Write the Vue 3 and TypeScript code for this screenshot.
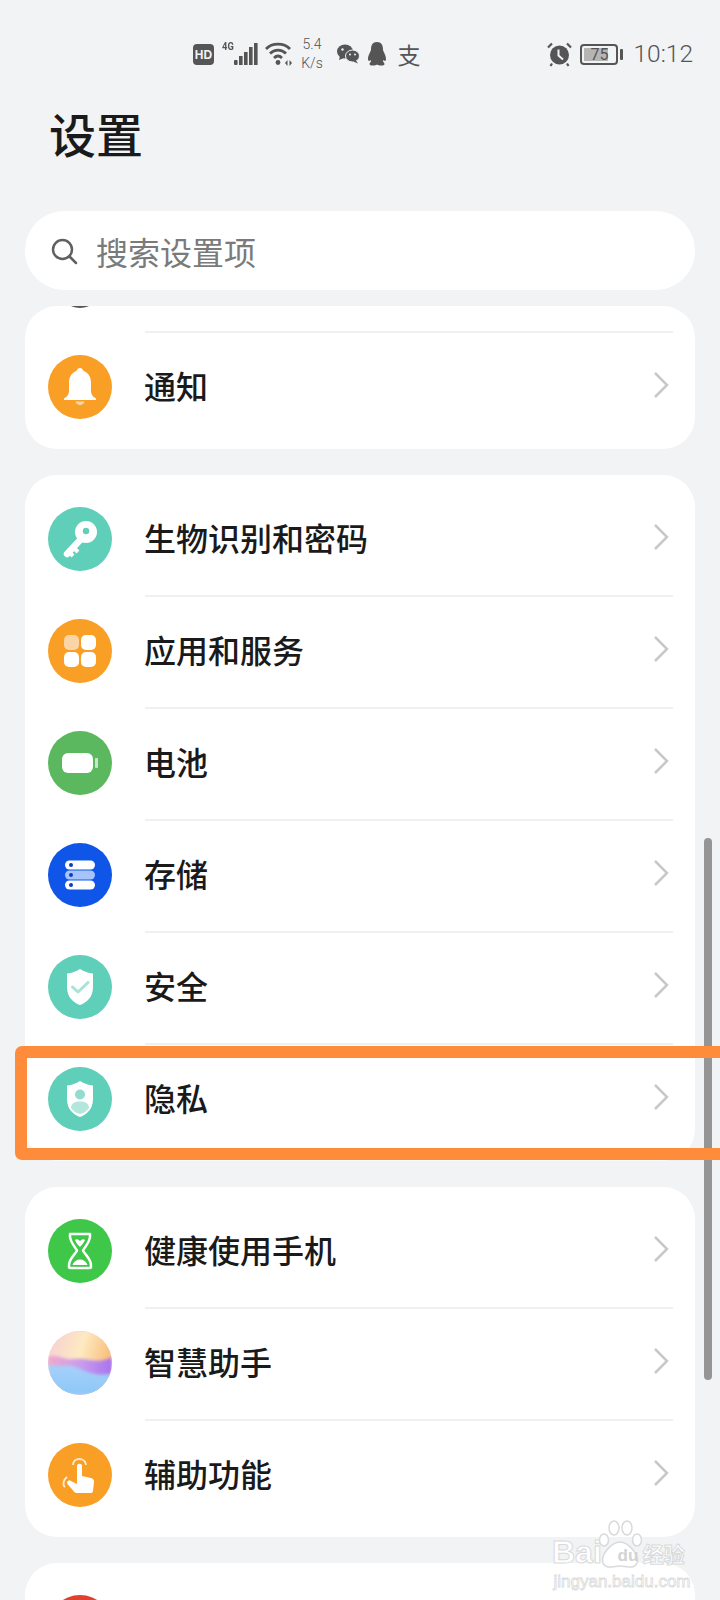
<script setup lang="ts">
type Row = { icon: string; label: string }

const firstCard: Row[] = [{ icon: 'bell', label: '通知' }]
const secondCard: Row[] = [
  { icon: 'key', label: '生物识别和密码' },
  { icon: 'apps', label: '应用和服务' },
  { icon: 'battery', label: '电池' },
  { icon: 'storage', label: '存储' },
  { icon: 'security', label: '安全' },
  { icon: 'privacy', label: '隐私' },
]
const thirdCard: Row[] = [
  { icon: 'health', label: '健康使用手机' },
  { icon: 'assistant', label: '智慧助手' },
  { icon: 'access', label: '辅助功能' },
]
const cards: Row[][] = [secondCard, thirdCard]
</script>

<template>
  <div class="page">
    <div class="status">
      <svg class="st-hd" width="21" height="21" viewBox="0 0 21 21">
        <rect width="21" height="21" rx="4" fill="#555" />
        <text x="10.5" y="15" text-anchor="middle" class="hd-text">HD</text>
      </svg>
      <div class="st-signal">
        <span class="st-4g">4G</span>
        <svg width="24" height="22" viewBox="0 0 24 22" fill="#555">
          <rect x="0" y="17" width="3.600" height="5" rx="1" />
          <rect x="5" y="13" width="3.600" height="9" />
          <rect x="10" y="9" width="3.600" height="13" />
          <rect x="15" y="4" width="3.600" height="18" />
          <rect x="20" y="0" width="3.600" height="22" />
        </svg>
      </div>
      <svg class="st-wifi" width="28" height="24" viewBox="0 0 28 24" fill="none" stroke="#555" stroke-width="2.800">
        <path d="M1 7C7 0.5 19 0.5 25 7" />
        <path d="M5 11.500C9.500 7 16.500 7 21 11.500" />
        <path d="M9 16C11.500 13.500 14.500 13.500 17 16" />
        <circle cx="13" cy="20.500" r="2.400" fill="#555" stroke="none" />
        <path d="M20 21l2.500-3v6zM27 21l-2.500-3v6z" fill="#555" stroke="none" />
      </svg>
      <div class="st-speed"><span>5.4</span><span>K/s</span></div>
      <svg class="st-wechat" width="23" height="20" viewBox="0 0 23 20" fill="#555">
        <ellipse cx="8" cy="7.500" rx="8" ry="7" />
        <path d="M3 12l-1 4 5-2z" />
        <ellipse cx="15.500" cy="12" rx="7" ry="6" stroke="#f1f3f5" stroke-width="1" />
        <path d="M19 16.500l2 3-5-2z" />
        <circle cx="5.500" cy="5.500" r="1.200" fill="#f1f3f5" />
        <circle cx="13" cy="10.500" r="1" fill="#f1f3f5" />
        <circle cx="18" cy="10.500" r="1" fill="#f1f3f5" />
      </svg>
      <svg class="st-qq" width="20" height="24" viewBox="0 0 20 24" fill="#555">
        <path d="M10 0C5.500 0 4 3.500 4 7.500C4 9.500 1 13 1 17C1 19 2 19.500 4 18C4.500 20 2.500 20.500 2.500 22C2.500 24 8 24 10 22.500C12 24 17.500 24 17.500 22C17.500 20.500 15.500 20 16 18C18 19.500 19 19 19 17C19 13 16 9.500 16 7.500C16 3.500 14.500 0 10 0Z" />
      </svg>
      <span class="st-alipay">支</span>
      <svg class="st-alarm" width="25" height="25" viewBox="0 0 25 25">
        <circle cx="12.500" cy="13" r="9.500" fill="#555" />
        <path d="M1 5.500L5 1.500M24 5.500L20 1.500M5 21.500L3.500 24M20 21.500L21.500 24" stroke="#555" stroke-width="2.200" fill="none" />
        <path d="M11.500 7.500V13.500L16 17.500" stroke="#f1f3f5" stroke-width="2" fill="none" />
      </svg>
      <div class="st-battery">
        <div class="st-battery-body"><i class="st-battery-fill"></i><span>75</span></div>
        <i class="st-battery-nub"></i>
      </div>
      <span class="st-time">10:12</span>
    </div>

    <h1 class="title">设置</h1>

    <div class="search">
      <svg width="28" height="28" viewBox="0 0 28 28" fill="none" stroke="#5f6060" stroke-width="2.500">
        <circle cx="12.500" cy="12.500" r="9.500" />
        <path d="M19.500 19.500L26 26" stroke-linecap="round" />
      </svg>
      <span>搜索设置项</span>
    </div>

    <section class="card card-clip">
      <i class="clip-dot"></i>
      <div v-for="row in firstCard" :key="row.label" class="row">
        <span class="ic ic-orange">
          <svg width="64" height="64" viewBox="0 0 64 64" fill="#fff">
            <path d="M32 13C34 13 35 14.500 35.500 16C41 18 43 22.500 43 28V36C43 39 44.500 42 48 43.500V45H16V43.500C19.500 42 21 39 21 36V28C21 22.500 23 18 28.500 16C29 14.500 30 13 32 13Z" />
            <path d="M27.500 46.500H36.500C36 48.500 34 50 32 50C30 50 28 48.500 27.500 46.500Z" opacity=".6" />
          </svg>
        </span>
        <span class="label">{{ row.label }}</span>
        <svg class="chev" width="16" height="28" viewBox="0 0 16 28" fill="none"><path d="M2 2L14 14L2 26" /></svg>
      </div>
    </section>

    <section v-for="(card, c) in cards" :key="c" class="card">
      <div v-for="row in card" :key="row.label" class="row">
        <span v-if="row.icon === 'key'" class="ic ic-teal">
          <svg width="64" height="64" viewBox="0 0 64 64">
            <path d="M34 31L19 47" fill="none" stroke="#fff" stroke-width="6.500" stroke-linecap="round" />
            <path d="M26 41L30 45M21.500 45.500L25 49" fill="none" stroke="#fff" stroke-width="4" />
            <circle cx="38" cy="25" r="11" fill="#fff" />
            <circle cx="38" cy="24" r="3.200" fill="#5fcfba" />
          </svg>
        </span>
        <span v-else-if="row.icon === 'apps'" class="ic ic-orange">
          <svg width="64" height="64" viewBox="0 0 64 64" fill="#fff">
            <rect x="16" y="16" width="15" height="15" rx="5" fill="#fcd5a6" />
            <rect x="33" y="16" width="15" height="15" rx="5" />
            <rect x="16" y="33" width="15" height="15" rx="5" />
            <rect x="33" y="33" width="15" height="15" rx="5" />
          </svg>
        </span>
        <span v-else-if="row.icon === 'battery'" class="ic ic-green">
          <svg width="64" height="64" viewBox="0 0 64 64">
            <rect x="14" y="22" width="31" height="20" rx="6" fill="#fff" />
            <rect x="47" y="27" width="3" height="10" rx="1" fill="#c5e8c6" />
          </svg>
        </span>
        <span v-else-if="row.icon === 'storage'" class="ic ic-blue">
          <svg width="64" height="64" viewBox="0 0 64 64">
            <rect x="17" y="17.500" width="30" height="9" rx="4.500" fill="#fff" />
            <rect x="17" y="27.500" width="30" height="9" rx="4.500" fill="#a6c3fc" />
            <rect x="17" y="37.500" width="30" height="9" rx="4.500" fill="#fff" />
            <circle cx="23" cy="22" r="2" fill="#0b3fb5" />
            <circle cx="23" cy="32" r="2" fill="#0b3fb5" />
            <circle cx="23" cy="42" r="2" fill="#0b3fb5" />
          </svg>
        </span>
        <span v-else-if="row.icon === 'security'" class="ic ic-teal">
          <svg width="64" height="64" viewBox="0 0 64 64" fill="none">
            <path d="M32 14C36 16.500 40 18 45 18.500V32C45 42 39 47.500 32 50C25 47.500 19 42 19 32V18.500C24 18 28 16.500 32 14Z" fill="#fff" />
            <path d="M24.500 32L30 37L40 27.500" stroke="#a9e3d7" stroke-width="3" stroke-linecap="round" stroke-linejoin="round" />
          </svg>
        </span>
        <span v-else-if="row.icon === 'privacy'" class="ic ic-teal">
          <svg width="64" height="64" viewBox="0 0 64 64">
            <path d="M32 14C36 16.500 40 18 45 18.500V32C45 42 39 47.500 32 50C25 47.500 19 42 19 32V18.500C24 18 28 16.500 32 14Z" fill="#fff" />
            <circle cx="32" cy="27.500" r="5" fill="#93dccd" />
            <path d="M23 41C23 36 27 34.500 32 34.500C37 34.500 41 36 41 41C38.500 44.500 35 46.500 32 47C29 46.500 25.500 44.500 23 41Z" fill="#b3e7dc" />
          </svg>
        </span>
        <span v-else-if="row.icon === 'health'" class="ic ic-lime">
          <svg width="64" height="64" viewBox="0 0 64 64" fill="none" stroke="#fff" stroke-width="2.500">
            <path d="M22 15H42C43 23 37 27 35 31.500C37 36 44 40 43 48C43 49 42 49 41 49H23C22 49 21 49 21 48C20 40 27 36 29 31.500C27 27 21 23 22 15Z" stroke-linejoin="round" />
            <path d="M27 21C29 19 31 21 32 22C33 21 35 19 37 21C36 24 33.500 26 32 28C30 26 28 24 27 21Z" fill="#fff" stroke="none" />
            <path d="M24.500 46C26 42 29.500 40.500 32 40.500C34.500 40.500 38 42 39.500 46Z" fill="#fff" stroke="none" />
          </svg>
        </span>
        <span v-else-if="row.icon === 'assistant'" class="ic ic-orb">
          <svg width="64" height="64" viewBox="0 0 64 64">
            <defs>
              <linearGradient id="orbTop" x1="0" y1="0" x2="1" y2="0.300">
                <stop offset="0" stop-color="#f6cdd4" />
                <stop offset="0.550" stop-color="#fdeac2" />
                <stop offset="1" stop-color="#f9bd7a" />
              </linearGradient>
              <linearGradient id="orbWave" x1="0" y1="0" x2="1" y2="0">
                <stop offset="0" stop-color="#f2a9cc" />
                <stop offset="0.500" stop-color="#c99cec" />
                <stop offset="1" stop-color="#a873ee" />
              </linearGradient>
              <linearGradient id="orbLow" x1="0" y1="0" x2="0" y2="1">
                <stop offset="0" stop-color="#a9d0fb" />
                <stop offset="1" stop-color="#8cc8f6" />
              </linearGradient>
            </defs>
            <rect width="64" height="64" fill="url(#orbTop)" />
            <path d="M0 26C8 22 16 30 26 28C38 26 50 34 64 26V48H0Z" fill="url(#orbWave)" />
            <path d="M0 32C8 38 18 32 28 36C40 42 52 46 64 42V64H0Z" fill="url(#orbLow)" />
          </svg>
        </span>
        <span v-else class="ic ic-orange">
          <svg width="64" height="64" viewBox="0 0 64 64">
            <path d="M29 23C29 20 34 20 34 23V33L43 35C45 35.500 46 37 46 39L45 48C45 49.500 43.500 50 42.500 50H29C27.500 50 26.500 49.500 25.500 48L19.500 41C18 39 20.500 36.500 23 38L29 41Z" fill="#fff" />
            <path d="M25 22C25 14 37.500 14 38 22" fill="none" stroke="#fff" stroke-width="1.800" opacity=".8" />
            <path d="M19 34C15 37 14.500 42 17 44" fill="none" stroke="#fff" stroke-width="1.800" opacity=".8" />
          </svg>
        </span>
        <span class="label">{{ row.label }}</span>
        <svg class="chev" width="16" height="28" viewBox="0 0 16 28" fill="none"><path d="M2 2L14 14L2 26" /></svg>
      </div>
    </section>

    <section class="card">
      <div class="row">
        <span class="ic ic-red"></span>
      </div>
    </section>

    <div class="scrollbar"></div>
    <div class="highlight"></div>

    <div class="mark">
      <div class="mark-top">
        <span class="mark-en">Bai</span>
        <svg class="mark-paw" width="44" height="50" viewBox="0 0 44 50" fill="#fff" stroke="#d9dadb" stroke-width="1.500">
          <ellipse cx="6" cy="20" rx="4.500" ry="6" />
          <ellipse cx="16" cy="8" rx="5" ry="7" />
          <ellipse cx="29" cy="8" rx="5" ry="7" />
          <ellipse cx="39" cy="20" rx="4.500" ry="6" />
          <path d="M22 22C30 22 42 35 39 43C36 50 28 46 22 46C16 46 8 50 5 43C2 35 14 22 22 22Z" />
        </svg>
        <span class="mark-du">du</span>
        <span class="mark-cn">经验</span>
      </div>
      <div class="mark-url">jingyan.baidu.com</div>
    </div>
  </div>
</template>

<style>
body {
  margin: 0;
  background: #f1f3f5;
}
</style>

<style scoped>
.page {
  position: relative;
  width: 720px;
  height: 1600px;
  overflow: hidden;
  background: #f1f3f5;
  font-family: "Noto Sans CJK SC", "Noto Sans", sans-serif;
  color: #1a1a1a;
}
.status {
  display: flex;
  align-items: center;
  height: 36px;
  padding-top: 36px;
  padding-left: 193px;
  color: #555;
  font-family: Roboto, "Noto Sans CJK SC", sans-serif;
}
.hd-text {
  font-family: "Liberation Sans", sans-serif;
  font-size: 12px;
  font-weight: 700;
  fill: #f1f3f5;
}
.st-signal {
  position: relative;
  margin-left: 20px;
  height: 22px;
}
.st-4g {
  position: absolute;
  left: -13px;
  top: -1px;
  font-size: 11px;
  font-weight: 700;
  line-height: 10px;
  transform: scaleX(0.85);
}
.st-wifi {
  margin-left: 7px;
}
.st-speed {
  display: flex;
  flex-direction: column;
  align-items: center;
  width: 26px;
  margin-left: 6px;
  font-size: 14px;
  font-weight: 300;
  line-height: 19px;
}
.st-wechat {
  margin-left: 12px;
}
.st-qq {
  margin-left: 7px;
}
.st-alipay {
  width: 24px;
  margin-left: 10px;
  font-family: "Noto Sans CJK SC", sans-serif;
  font-size: 23px;
  line-height: 24px;
  text-align: center;
}
.st-alarm {
  margin-left: auto;
}
.st-battery {
  display: flex;
  align-items: center;
  gap: 2px;
  margin-left: 8px;
}
.st-battery-body {
  position: relative;
  width: 38px;
  height: 21px;
  box-sizing: border-box;
  border: 2px solid #555;
  border-radius: 4px;
  font-size: 16px;
  line-height: 18px;
  text-align: center;
}
.st-battery-body span {
  position: relative;
}
.st-battery-fill {
  position: absolute;
  left: 2px;
  top: 2px;
  bottom: 2px;
  width: 24px;
  background: #b5b5b5;
}
.st-battery-nub {
  width: 3px;
  height: 11px;
  background: #555;
  border-radius: 1px;
}
.st-time {
  margin-left: 10px;
  margin-right: 27px;
  font-size: 24.500px;
  font-weight: 300;
  line-height: 30px;
}
.title {
  margin: 0;
  padding: 30px 0 0 49px;
  height: 69px;
  font-size: 47px;
  font-weight: 500;
  line-height: 62px;
  color: #1a1a1a;
}
.search {
  display: flex;
  align-items: center;
  gap: 18px;
  height: 79px;
  margin: 40px 25px 0;
  padding-left: 25px;
  background: #fff;
  border-radius: 39px;
  font-size: 32px;
  color: #7a7a7a;
}
.card {
  margin: 26px 25px 0;
  padding: 8px 0 6px;
  background: #fff;
  border-radius: 32px;
}
.card-clip {
  position: relative;
  margin-top: 16px;
  padding: 25px 0 6px;
  overflow: hidden;
}
.clip-dot {
  position: absolute;
  left: 44px;
  top: -8px;
  width: 22px;
  height: 10px;
  border-radius: 50%;
  background: #555;
}
.row {
  display: flex;
  align-items: center;
  position: relative;
  height: 112px;
  padding: 0 23px;
  box-sizing: border-box;
}
.row + .row::before {
  content: "";
  position: absolute;
  left: 120px;
  right: 22px;
  top: 0;
  height: 2px;
  background: #f0f0f0;
}
.card-clip .row::before {
  content: "";
  position: absolute;
  left: 120px;
  right: 22px;
  top: 0;
  height: 2px;
  background: #f0f0f0;
}
.ic {
  position: relative;
  flex: none;
  display: block;
  width: 64px;
  height: 64px;
  border-radius: 50%;
  overflow: hidden;
}
.ic svg {
  display: block;
}
.ic-orange { background: #fa9f25; }
.ic-teal { background: #5fcfba; }
.ic-green { background: #5cb85f; }
.ic-blue { background: #0f56e8; }
.ic-lime { background: #3ec748; }
.ic-red { background: #e0402c; }
.ic-orb {
  background: #f6cdd4;
}
.ic-orb svg {
  filter: blur(1.5px);
}
.label {
  flex: 1;
  margin-left: 32px;
  margin-bottom: 4px;
  font-size: 32px;
  font-weight: 500;
  line-height: 40px;
  color: #1a1a1a;
}
.chev {
  flex: none;
  margin-right: 3px;
  margin-bottom: 4px;
}
.chev path {
  stroke: #c8c8c8;
  stroke-width: 2.500;
}
.scrollbar {
  position: absolute;
  left: 704px;
  top: 838px;
  width: 8px;
  height: 542px;
  border-radius: 4px;
  background: #959595;
}
.highlight {
  position: absolute;
  left: 15px;
  top: 1046px;
  width: 720px;
  height: 114px;
  box-sizing: border-box;
  border: 12px solid #ff8c3a;
  border-radius: 7px;
}
.mark {
  position: absolute;
  left: 552px;
  top: 1522px;
  width: 140px;
  text-align: center;
  color: #fff;
}
.mark-top {
  display: flex;
  align-items: flex-end;
  height: 46px;
  position: relative;
}
.mark-en {
  font-family: "Liberation Sans", sans-serif;
  font-size: 32px;
  font-weight: 700;
  line-height: 32px;
  -webkit-text-stroke: 1px #d9dadb;
}
.mark-paw {
  margin-left: -4px;
  margin-bottom: -2px;
}
.mark-du {
  position: absolute;
  left: 56px;
  bottom: 2px;
  width: 40px;
  font-family: "Liberation Sans", sans-serif;
  font-size: 17px;
  font-weight: 700;
  line-height: 20px;
  color: #d2d3d4;
}
.mark-cn {
  margin-left: 1px;
  font-size: 21px;
  font-weight: 700;
  line-height: 30px;
  white-space: nowrap;
  -webkit-text-stroke: 1px #d9dadb;
}
.mark-url {
  margin-top: 4px;
  font-family: "Liberation Sans", sans-serif;
  font-size: 17px;
  line-height: 20px;
  white-space: nowrap;
  -webkit-text-stroke: 0.8px #d9dadb;
}
</style>
